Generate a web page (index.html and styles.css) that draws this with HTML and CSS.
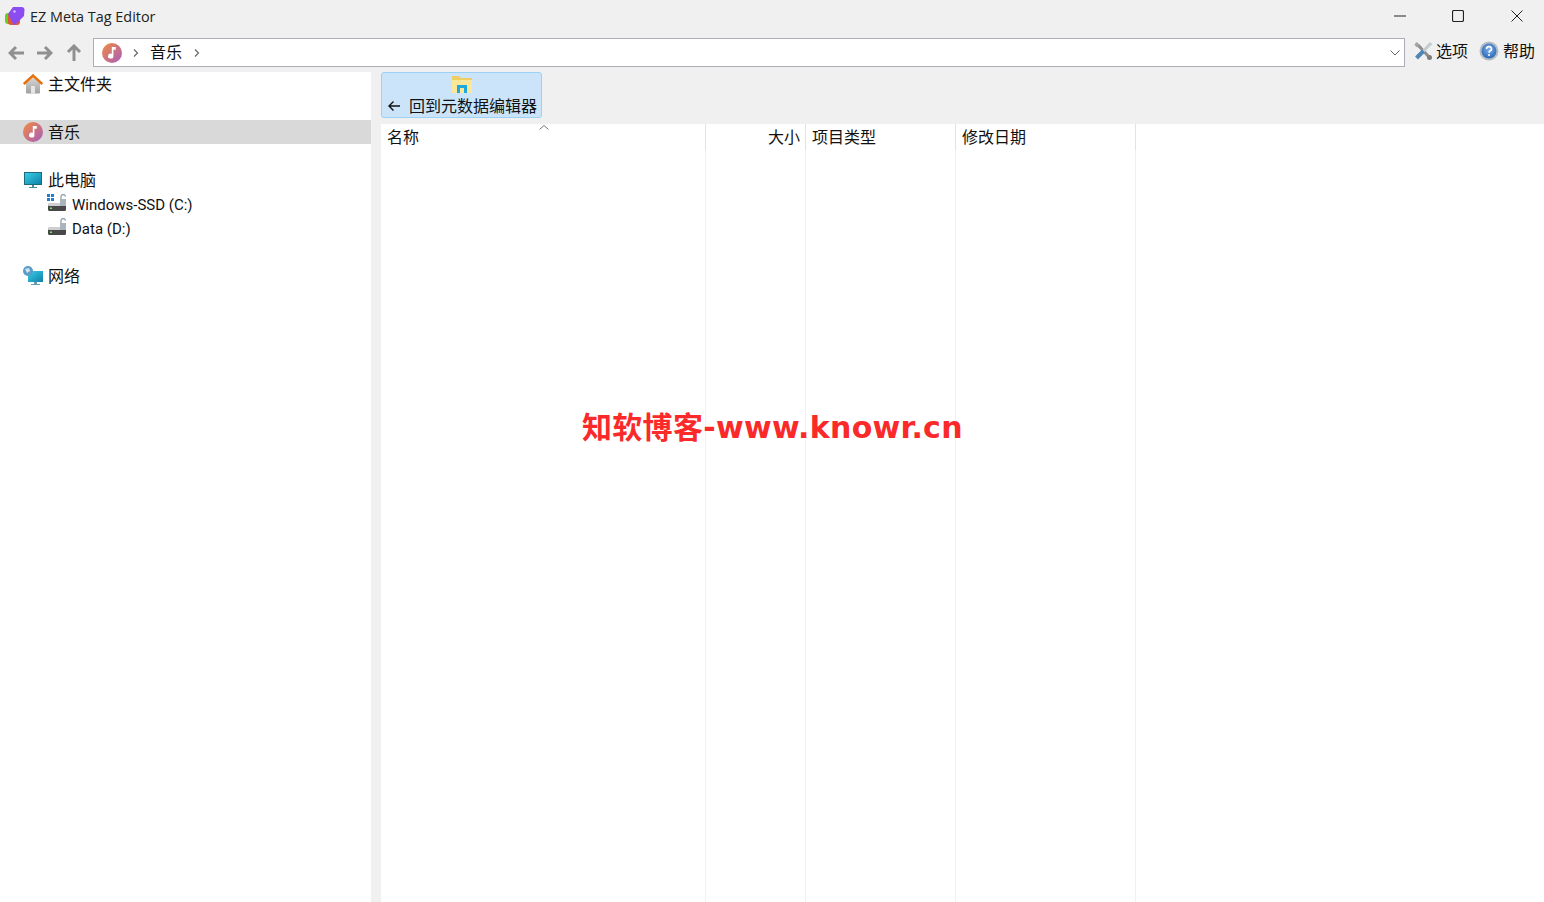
FILE: index.html
```html
<!DOCTYPE html>
<html lang="zh-CN">
<head>
    <meta charset="UTF-8">
    <title>EZ Meta Tag Editor</title>
    <link rel="stylesheet" href="styles.css">
</head>
<body>
    <svg class="defs" width="0" height="0">
        <defs>
            <linearGradient id="music-grad" x1="0" y1="0" x2="1" y2="1">
                <stop offset="0" stop-color="#f48c3e"/>
                <stop offset="1" stop-color="#a65cc0"/>
            </linearGradient>
            <linearGradient id="screen-grad" x1="0" y1="0" x2="1" y2="1">
                <stop offset="0" stop-color="#38d0e8"/>
                <stop offset="1" stop-color="#0f7fa8"/>
            </linearGradient>
            <linearGradient id="house-grad" x1="0" y1="0" x2="0" y2="1">
                <stop offset="0" stop-color="#d8d8d8"/>
                <stop offset="1" stop-color="#a0a0a0"/>
            </linearGradient>
            <radialGradient id="help-grad" cx="0.5" cy="0.4" r="0.6">
                <stop offset="0" stop-color="#7fb0ea"/>
                <stop offset="1" stop-color="#2c68b8"/>
            </radialGradient>
            <symbol id="music" viewBox="0 0 20 20">
                <circle cx="10" cy="10" r="10" fill="url(#music-grad)"/>
                <path d="M9.8 4 L13.8 4 L13.8 6.8 L11.4 6.8 L11.4 13 A2.7 2.5 0 1 1 9.8 10.8 Z" fill="#fff"/>
            </symbol>
            <symbol id="drive" viewBox="0 0 20 20">
                <rect x="1" y="10" width="18" height="7" rx="1.5" fill="#484848"/>
                <rect x="1" y="9" width="18" height="3" rx="1" fill="#cfcfcf"/>
                <rect x="3" y="13.5" width="2" height="1.5" fill="#7ee06a"/>
                <rect x="13" y="5" width="6" height="7" fill="#a9b4bd"/>
                <path d="M14 5 V3 A2.2 2.2 0 0 1 18.4 2.5" fill="none" stroke="#8fa0ad" stroke-width="1.3"/>
            </symbol>
        </defs>
    </svg>

    <div class="titlebar">
        <svg class="app-icon" width="20" height="20" viewBox="0 0 20 20">
            <rect x="0" y="7" width="11" height="11" rx="3" fill="#62d21f"/>
            <rect x="3" y="7" width="12" height="12" rx="3" fill="#e0583a"/>
            <path d="M8 1 L16.5 1 A3 3 0 0 1 19.5 4 L19 10 L11 18 A2 2 0 0 1 8 17.5 L3.5 9 A2 2 0 0 1 4 6.5 Z" fill="#8b4df0"/>
            <circle cx="9.5" cy="5.5" r="1.2" fill="#d7c4ff"/>
        </svg>
        <span class="app-title">EZ Meta Tag Editor</span>
        <div class="win-buttons">
            <button class="win-btn">
                <svg width="12" height="12" viewBox="0 0 12 12"><path d="M0 6 H12" stroke="#222" stroke-width="1"/></svg>
            </button>
            <button class="win-btn">
                <svg width="12" height="12" viewBox="0 0 12 12"><rect x="0.5" y="0.5" width="11" height="11" rx="1.5" fill="none" stroke="#222" stroke-width="1.2"/></svg>
            </button>
            <button class="win-btn">
                <svg width="12" height="12" viewBox="0 0 12 12"><path d="M0.5 0.5 L11.5 11.5 M11.5 0.5 L0.5 11.5" stroke="#222" stroke-width="1"/></svg>
            </button>
        </div>
    </div>

    <div class="toolbar">
        <div class="nav-buttons">
            <svg width="18" height="16" viewBox="0 0 18 16"><path d="M8 2 L2 8 L8 14 M2 8 H16" fill="none" stroke="#909090" stroke-width="3"/></svg>
            <svg width="18" height="16" viewBox="0 0 18 16"><path d="M10 2 L16 8 L10 14 M16 8 H2" fill="none" stroke="#909090" stroke-width="3"/></svg>
            <svg class="nav-up" width="16" height="18" viewBox="0 0 16 18"><path d="M2 8 L8 2 L14 8 M8 2 V17" fill="none" stroke="#909090" stroke-width="3"/></svg>
        </div>
        <div class="address">
            <svg class="addr-icon" width="20" height="20"><use href="#music"/></svg>
            <svg class="crumb-arrow" width="6" height="8" viewBox="0 0 6 8"><path d="M1 0.5 L4.5 4 L1 7.5" fill="none" stroke="#666" stroke-width="1.2"/></svg>
            <span class="crumb">音乐</span>
            <svg class="crumb-arrow" width="6" height="8" viewBox="0 0 6 8"><path d="M1 0.5 L4.5 4 L1 7.5" fill="none" stroke="#666" stroke-width="1.2"/></svg>
            <svg class="addr-drop" width="10" height="6" viewBox="0 0 10 6"><path d="M0.5 0.5 L5 5 L9.5 0.5" fill="none" stroke="#666" stroke-width="1"/></svg>
        </div>
        <div class="tool-item">
            <svg width="18" height="18" viewBox="0 0 18 18">
                <path d="M4 3 L15 15" stroke="#8d8d8d" stroke-width="3"/>
                <path d="M0.5 3 L3 5.5 L5.5 3 L3 0 A4 4 0 0 0 0.5 3 Z" fill="#a3a3a3"/>
                <circle cx="15.5" cy="15.5" r="2.5" fill="#7d7d7d"/>
                <path d="M17 1 L9 9.5" stroke="#c3cad0" stroke-width="3"/>
                <path d="M9.5 9 L2.5 16" stroke="#4f86b8" stroke-width="4"/>
            </svg>
            <span>选项</span>
        </div>
        <div class="tool-item help">
            <svg width="20" height="20" viewBox="0 0 20 20">
                <circle cx="10" cy="10" r="9.5" fill="#b5bcc4"/>
                <circle cx="10" cy="10" r="7.5" fill="url(#help-grad)"/>
                <path d="M7.5 8 A2.5 2.3 0 1 1 10.5 10.2 L10 11.8" fill="none" stroke="#fff" stroke-width="1.6"/>
                <circle cx="10" cy="14" r="1" fill="#fff"/>
            </svg>
            <span>帮助</span>
        </div>
    </div>

    <div class="content">
        <div class="sidebar">
            <div class="tree-row">
                <svg class="tree-icon" width="20" height="20" viewBox="0 0 20 20">
                    <path d="M3 9 L10 3 L17 9 V18.5 A1 1 0 0 1 16 19.5 H4 A1 1 0 0 1 3 18.5 Z" fill="url(#house-grad)"/>
                    <rect x="8" y="12" width="4" height="7.5" fill="#e6e6e6"/>
                    <path d="M0.8 10 L10 1.5 L19.2 10" fill="none" stroke="#e8710a" stroke-width="2.4"/>
                </svg>
                <span>主文件夹</span>
            </div>
            <div class="tree-row"></div>
            <div class="tree-row selected">
                <svg class="tree-icon" width="20" height="20"><use href="#music"/></svg>
                <span>音乐</span>
            </div>
            <div class="tree-row"></div>
            <div class="tree-row">
                <svg class="tree-icon" width="20" height="20" viewBox="0 0 20 20">
                    <rect x="1.5" y="2.5" width="17" height="12" fill="url(#screen-grad)" stroke="#1c6a80" stroke-width="1"/>
                    <path d="M9 15 H11 V17 H14 V18 H6 V17 H9 Z" fill="#4d8aa0"/>
                </svg>
                <span>此电脑</span>
            </div>
            <div class="tree-row child">
                <svg class="tree-icon" width="20" height="20"><use href="#drive"/></svg>
                <svg class="win-logo" width="7" height="7" viewBox="0 0 7 7">
                    <path d="M0 0 H3 V3 H0 Z M4 0 H7 V3 H4 Z M0 4 H3 V7 H0 Z M4 4 H7 V7 H4 Z" fill="#1f7fd6"/>
                </svg>
                <span class="latin">Windows-SSD (C:)</span>
            </div>
            <div class="tree-row child">
                <svg class="tree-icon" width="20" height="20"><use href="#drive"/></svg>
                <span class="latin">Data (D:)</span>
            </div>
            <div class="tree-row"></div>
            <div class="tree-row">
                <svg class="tree-icon" width="20" height="20" viewBox="0 0 20 20">
                    <rect x="5" y="5" width="15" height="11" fill="url(#screen-grad)"/>
                    <path d="M11 16 H14 V18 H17 V19 H8 V18 H11 Z" fill="#6a9cb0"/>
                    <circle cx="5" cy="5" r="5" fill="#5c9cc8"/>
                    <path d="M2 3 L6 2 L7 5 L4 7 Z" fill="#cfe4f2"/>
                </svg>
                <span>网络</span>
            </div>
        </div>
        <div class="splitter"></div>
        <div class="main">
            <div class="ribbon">
                <button class="back-btn">
                    <svg class="folder-icon" width="22" height="19" viewBox="0 0 22 19">
                        <path d="M1 1 H8 L10 3 H21 V18 H1 Z" fill="#f0cf62"/>
                        <path d="M1 5 H21 V18 H1 Z" fill="#fbe69a"/>
                        <path d="M6 18 V10 H16 V18 H13 V13 H9 V18 Z" fill="#1fa8e0"/>
                    </svg>
                    <span class="back-label">
                        <svg width="12" height="10" viewBox="0 0 12 10"><path d="M5.5 0.5 L1 5 L5.5 9.5 M1 5 H12" fill="none" stroke="#111" stroke-width="1.4"/></svg>
                        <span>回到元数据编辑器</span>
                    </span>
                </button>
            </div>
            <div class="columns">
                <div class="col col-name">
                    <svg class="sort-arrow" width="10" height="5" viewBox="0 0 10 5"><path d="M0.5 4.5 L5 0.5 L9.5 4.5" fill="none" stroke="#777" stroke-width="1"/></svg>
                    <div class="col-head">名称</div>
                </div>
                <div class="col col-size"><div class="col-head">大小</div></div>
                <div class="col col-type"><div class="col-head">项目类型</div></div>
                <div class="col col-date"><div class="col-head">修改日期</div></div>
            </div>
        </div>
    </div>

    <div class="watermark">知软博客-www.knowr.cn</div>
</body>
</html>
```

FILE: styles.css
```css
html, body {
    height: 100%;
}
body {
    margin: 0;
    height: 902px;
    overflow: hidden;
    display: flex;
    flex-direction: column;
    font-family: "Open Sans", "Noto Sans CJK SC", sans-serif;
    font-size: 16px;
    color: #111;
    background: #f0f0f0;
    position: relative;
}
.defs {
    position: absolute;
}
.titlebar {
    height: 32px;
    display: flex;
    align-items: center;
    padding-left: 5px;
    flex-shrink: 0;
}
.app-title {
    margin-left: 5px;
    font-size: 14.4px;
    color: #222;
}
.win-buttons {
    margin-left: auto;
    margin-right: -2px;
    display: flex;
}
.win-btn {
    width: 58.5px;
    height: 32px;
    border: none;
    background: none;
    padding: 0;
    display: flex;
    align-items: center;
    justify-content: center;
}
.toolbar {
    height: 40px;
    display: flex;
    align-items: center;
    flex-shrink: 0;
}
.nav-buttons {
    width: 93px;
    padding: 2px 0 0 8px;
    box-sizing: border-box;
    display: flex;
    align-items: center;
    gap: 9px;
}
.nav-up {
    margin-left: 4px;
}
.address {
    width: 1312px;
    height: 29px;
    box-sizing: border-box;
    margin-top: 1px;
    background: #fff;
    border: 1px solid #adadb5;
    display: flex;
    align-items: center;
    padding-left: 8px;
}
.crumb-arrow {
    margin-left: 11px;
    flex-shrink: 0;
}
.crumb {
    margin: 0 1px 4px 11px;
    font-size: 16px;
}
.addr-drop {
    margin-left: auto;
    margin-right: 4px;
}
.tool-item {
    display: flex;
    align-items: center;
    gap: 4px;
    margin-left: 9px;
    margin-top: -2px;
    font-size: 16px;
}
.tool-item span {
    margin-bottom: 2px;
}
.tool-item.help {
    margin-left: 11px;
}
.content {
    flex: 1;
    display: flex;
    min-height: 0;
}
.sidebar {
    width: 371px;
    background: #fff;
    flex-shrink: 0;
}
.tree-row {
    height: 24px;
    display: flex;
    align-items: center;
    padding-left: 23px;
    position: relative;
    white-space: nowrap;
}
.tree-row span {
    margin-bottom: 2px;
}
.tree-row span.latin {
    margin-bottom: 0;
    margin-top: 2px;
    font-family: Roboto, sans-serif;
    font-size: 15px;
}
.tree-row.child {
    padding-left: 47px;
}
.tree-row.selected {
    background: #d9d9d9;
}
.tree-icon {
    margin-right: 5px;
    flex-shrink: 0;
}
.win-logo {
    position: absolute;
    left: 47px;
    top: 2px;
}
.splitter {
    width: 10px;
    flex-shrink: 0;
}
.main {
    flex: 1;
    display: flex;
    flex-direction: column;
    min-width: 0;
}
.ribbon {
    height: 52px;
    flex-shrink: 0;
}
.back-btn {
    width: 161px;
    height: 46px;
    box-sizing: border-box;
    padding: 2px 0 0;
    background: #cce4f9;
    border: 1px solid #99d1f7;
    border-radius: 3px;
    display: flex;
    flex-direction: column;
    align-items: center;
    font: inherit;
    color: #111;
}
.folder-icon {
    flex-shrink: 0;
}
.back-label {
    display: flex;
    align-items: center;
    gap: 9px;
    line-height: 22px;
    white-space: nowrap;
    margin: 1px 0 0 2px;
}
.columns {
    flex: 1;
    display: flex;
    background: #fff;
    min-height: 0;
}
.col {
    box-sizing: border-box;
    border-right: 1px solid #edf2f8;
    position: relative;
}
.col-head {
    height: 26px;
    line-height: 26px;
    padding: 0 6px;
    border-right: 1px solid #e3e3e3;
    margin-right: -1px;
}
.col-name {
    width: 325px;
}
.col-size {
    width: 100px;
    text-align: right;
}
.col-size .col-head {
    padding-right: 5px;
}
.col-type {
    width: 150px;
}
.col-date {
    width: 180px;
}
.sort-arrow {
    position: absolute;
    left: 158px;
    top: 1px;
}
.watermark {
    position: absolute;
    left: 582px;
    top: 406px;
    font-family: "DejaVu Sans", "Noto Sans CJK SC", sans-serif;
    font-weight: 700;
    font-size: 30px;
    line-height: 44px;
    letter-spacing: 0.3px;
    color: #fb2a2a;
    white-space: nowrap;
}
```
